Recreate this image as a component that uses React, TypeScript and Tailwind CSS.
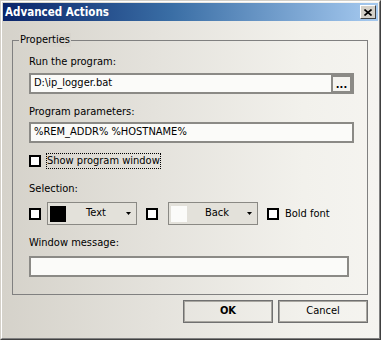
import React from "react";

const font = { fontFamily: '"DejaVu Sans Condensed", "Liberation Sans", sans-serif' };

function Check({ focus, label }: { focus?: boolean; label?: string }) {
  return (
    <div className="flex items-center">
      <div className="w-[12px] h-[12px] border-2 border-black bg-white shrink-0" />
      {label && (
        <span
          className={
            "ml-[5px] text-[11px] leading-[16px] px-[1px] text-black " +
            (focus ? "outline outline-1 outline-dotted outline-black -outline-offset-1" : "")
          }
        >
          {label}
        </span>
      )}
    </div>
  );
}

function Combo({ swatch, text }: { swatch: string; text: string }) {
  return (
    <div className="w-[90px] h-[23px] border border-[#8a8984] bg-[#e3e1da] flex items-center pl-[2px] pr-[5px]">
      <div className={"w-[16px] h-[16px] " + swatch} />
      <span className="flex-1 text-center text-[11px] text-black">{text}</span>
      <svg width="5" height="3" viewBox="0 0 5 3">
        <path d="M0 0h5L2.5 3z" fill="#000" />
      </svg>
    </div>
  );
}

export default function App() {
  return (
    <div style={font} className="w-[381px] h-[340px] overflow-hidden">
      <div className="w-[381px] h-[340px] border-t border-l border-[#d4d0c8] border-r border-b border-r-[#404040] border-b-[#404040]">
        <div className="w-full h-full border-t border-l border-white border-r border-b border-r-[#808080] border-b-[#808080] p-[1px] bg-[linear-gradient(90deg,#d5d2ca_0%,#e4e2dc_40%,#f2f1ec_80%,#f5f4f0_100%)] flex flex-col">
          <div className="h-[18px] bg-[linear-gradient(90deg,#0a246a_0%,#3a6ea5_45%,#a6caf0_100%)] flex items-center pl-[2px] pr-[2px]">
            <span className="text-white font-bold text-[11.5px] flex-1 leading-[18px]">Advanced Actions</span>
            <div className="w-[16px] h-[14px] bg-[#d4d0c8] border border-t-white border-l-white border-r-[#404040] border-b-[#404040] flex items-center justify-center">
              <svg width="8" height="7" viewBox="0 0 8 7">
                <path d="M0.5 0.5L7.5 6.5M7.5 0.5L0.5 6.5" stroke="#000" strokeWidth="1.6" />
              </svg>
            </div>
          </div>

          <div className="relative mt-[19px] ml-[9px] w-[356px] h-[255px] border border-[#808080]">
            <span className="absolute left-[6px] top-[-8px] px-[1px] text-[11px] leading-[14px] text-black bg-[#d8d5ce]">
              Properties
            </span>
            <div className="flex flex-col pl-[16px] pr-[13px]">
              <div className="mt-[14px] text-[11px] leading-[13px] text-black">Run the program:</div>
              <div className="mt-[5px] h-[21px] border-2 border-[#8b8a86] bg-[#fbfbf9] flex items-center pl-[3px] pr-[0px]">
                <span className="flex-1 text-[11px] text-black">D:\ip_logger.bat</span>
                <div className="w-[21px] h-[18px] border-2 border-[#8b8a86] bg-[#f4f3ef] flex items-end justify-center pb-[1px]">
                  <span className="text-[11px] font-bold leading-[10px] text-black">...</span>
                </div>
              </div>
              <div className="mt-[11px] text-[11px] leading-[13px] text-black">Program parameters:</div>
              <div className="mt-[4px] h-[21px] border-2 border-[#8b8a86] bg-[#fbfbf9] flex items-center pl-[3px]">
                <span className="text-[11px] text-black">%REM_ADDR% %HOSTNAME%</span>
              </div>
              <div className="mt-[10px]">
                <Check focus label="Show program window" />
              </div>
              <div className="mt-[13px] text-[11px] leading-[13px] text-black">Selection:</div>
              <div className="mt-[7px] flex items-center">
                <Check />
                <div className="ml-[6px]">
                  <Combo swatch="bg-black" text="Text" />
                </div>
                <div className="ml-[9px]">
                  <Check />
                </div>
                <div className="ml-[10px]">
                  <Combo swatch="bg-[#fbfbf9]" text="Back" />
                </div>
                <div className="ml-[9px]">
                  <Check label="Bold font" />
                </div>
              </div>
              <div className="mt-[11px] text-[11px] leading-[13px] text-black">Window message:</div>
              <div className="mt-[7px] w-[320px] h-[21px] border-2 border-[#8b8a86] bg-[#fbfbf9]" />
            </div>
          </div>

          <div className="mt-[5px] flex justify-end gap-[5px] pr-[10px]">
            <div className="w-[90px] h-[23px] border border-[#707070] shadow-[inset_0_0_0_1px_#a8a6a0] flex items-center justify-center text-[11px] font-bold text-black">
              OK
            </div>
            <div className="w-[90px] h-[23px] border border-[#707070] shadow-[inset_0_0_0_1px_#a8a6a0] flex items-center justify-center text-[11px] text-black">
              Cancel
            </div>
          </div>
        </div>
      </div>
    </div>
  );
}
